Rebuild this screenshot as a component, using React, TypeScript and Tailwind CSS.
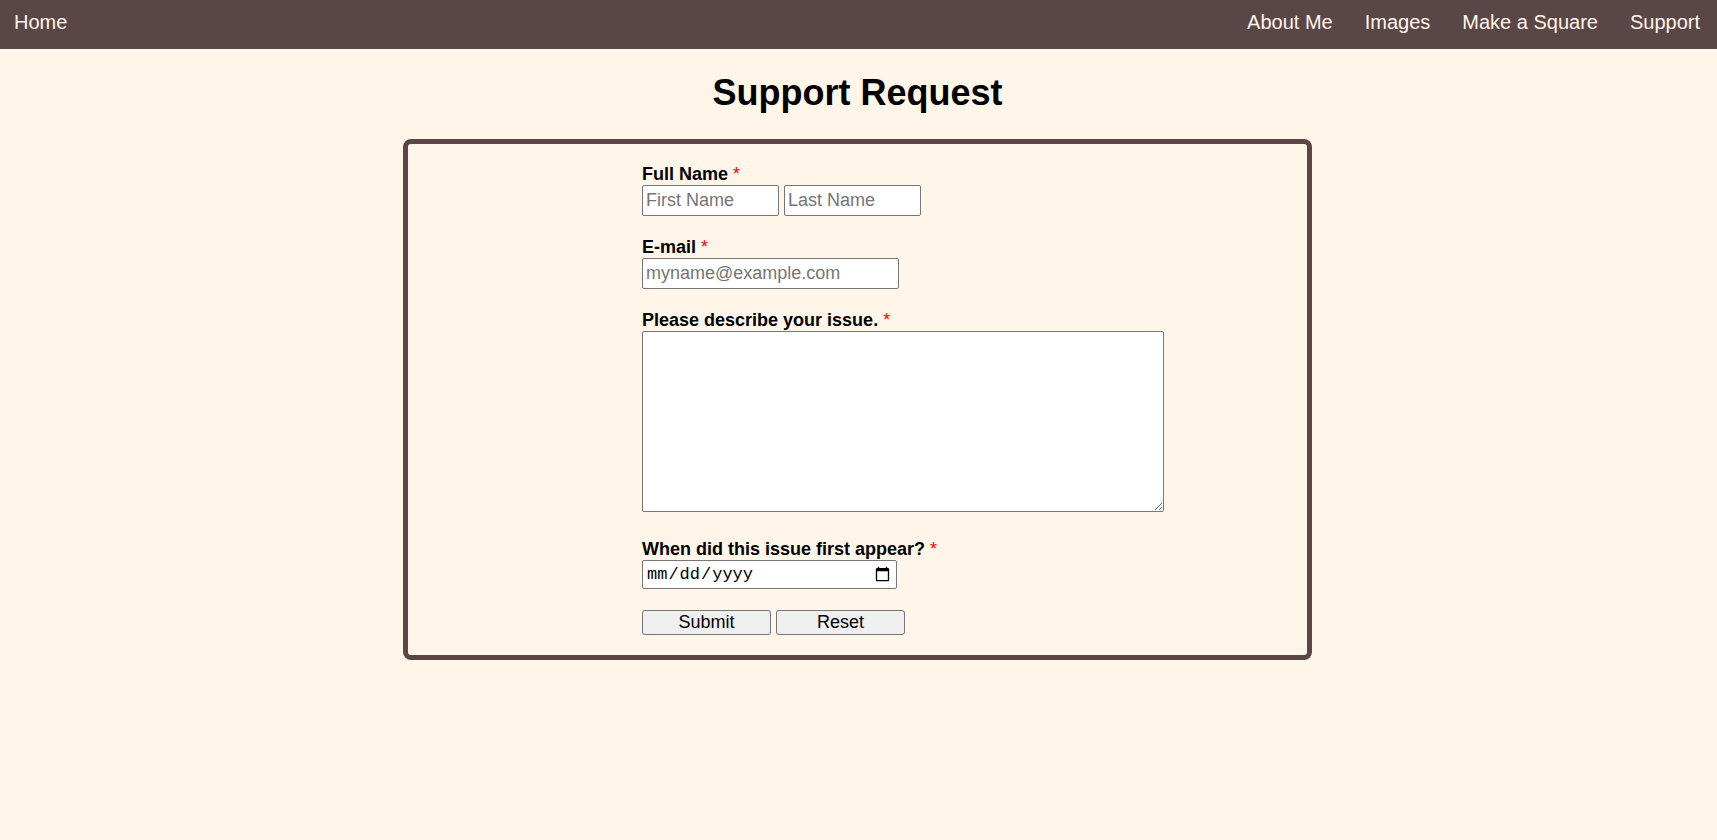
const navLinks = ["About Me", "Images", "Make a Square", "Support"];

const Req = () => <span className="font-normal text-[#ff0000]"> *</span>;

const fieldInput =
  "block h-[31px] bg-white border border-[#767676] rounded-[2px] px-[3px] text-[18px] text-black placeholder:text-[#757575] outline-none";

const labelCls = "text-[18px] leading-[20px] font-bold";

export default function App() {
  return (
    <div className="min-h-screen w-full bg-[#fff6e9] font-['Liberation_Sans',Arial,sans-serif] text-black">
      <nav className="h-[49px] w-full bg-[#5b4647] flex justify-between pt-[11px] pl-[14px] pr-[17px] text-[20px] leading-[23px] text-[#fff6e9]">
        <a href="#" className="hover:underline">
          Home
        </a>
        <div className="flex gap-[32px]">
          {navLinks.map((l) => (
            <a key={l} href="#" className="hover:underline">
              {l}
            </a>
          ))}
        </div>
      </nav>

      <main className="pr-[2px]">
        <h1 className="mt-[23px] mb-[26px] text-center text-[36px] leading-[41px] font-bold">
          Support Request
        </h1>

        <div className="mx-auto w-[909px] border-[5px] border-[#5b4647] rounded-lg pt-[20px] pb-[20px] pl-[234px]">
          <form className="flex flex-col" onSubmit={(e) => e.preventDefault()}>
            <label className={labelCls}>
              Full Name<Req />
            </label>
            <div className="flex gap-[5px] mt-px">
              <input className={`${fieldInput} w-[137px]`} placeholder="First Name" />
              <input className={`${fieldInput} w-[137px]`} placeholder="Last Name" />
            </div>

            <label className={`mt-[21px] ${labelCls}`}>
              E-mail<Req />
            </label>
            <input
              type="email"
              className={`${fieldInput} w-[257px] mt-px`}
              placeholder="myname@example.com"
            />

            <label className={`mt-[21px] ${labelCls}`}>
              Please describe your issue.<Req />
            </label>
            <textarea className="block mt-px w-[522px] h-[181px] bg-white border border-[#767676] rounded-[2px] p-[2px] text-[16px] outline-none" />

            <label className={`mt-[27px] ${labelCls}`}>
              When did this issue first appear?<Req />
            </label>
            <input
              type="date"
              className="block mt-px w-[255px] h-[29px] bg-white border border-[#767676] rounded-[2px] px-[3px] text-[17px] font-['Liberation_Mono',monospace] text-black outline-none"
            />

            <div className="flex gap-[5px] mt-[21px]">
              <button
                type="submit"
                className="w-[129px] h-[25px] bg-[#efefef] border border-[#767676] rounded-[3px] text-[18px] leading-[21px]"
              >
                Submit
              </button>
              <button
                type="reset"
                className="w-[129px] h-[25px] bg-[#efefef] border border-[#767676] rounded-[3px] text-[18px] leading-[21px]"
              >
                Reset
              </button>
            </div>
          </form>
        </div>
      </main>
    </div>
  );
}
